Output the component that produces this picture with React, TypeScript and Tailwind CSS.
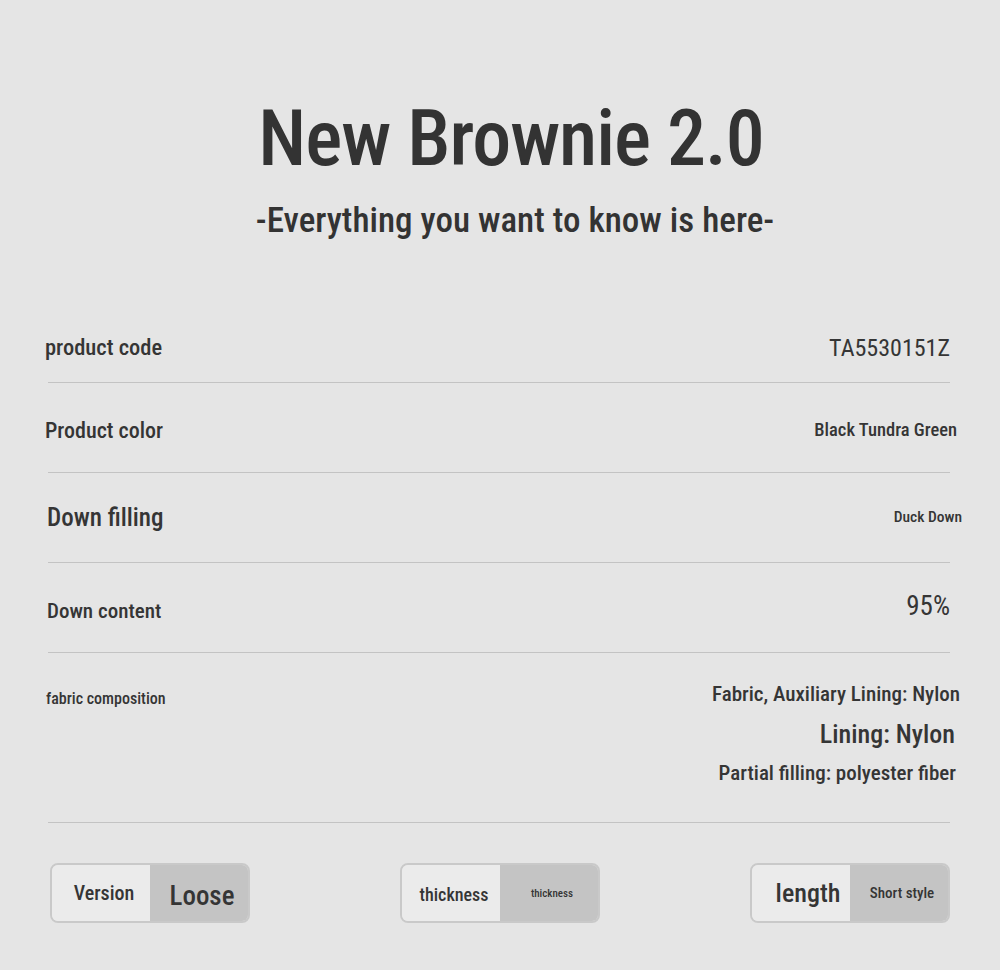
const rows = [
  {
    label: 'product code',
    value: 'TA5530151Z',
    row: 'pt-[20px] pl-[45px] pr-[50px]',
    labelCls: 'text-[22.5px] font-medium',
    valueCls: 'text-[24px] font-normal',
  },
  {
    label: 'Product color',
    value: 'Black Tundra Green',
    row: 'pt-[6px] pl-[45px] pr-[43px]',
    labelCls: 'text-[22px] font-medium',
    valueCls: 'text-[18.5px] font-medium',
  },
  {
    label: 'Down filling',
    value: 'Duck Down',
    row: 'pt-0 pl-[47px] pr-[38px]',
    labelCls: 'text-[25px] font-medium',
    valueCls: 'text-[15.5px] font-medium',
  },
  {
    label: 'Down content',
    value: '95%',
    row: 'pt-[8px] pl-[47px] pr-[50px]',
    labelCls: 'text-[21px] font-medium',
    valueCls: 'text-[27px] font-normal -mt-[10px]',
  },
];

const Divider = () => <div className="ml-[48px] mr-[50px] h-px bg-[#c3c3c3]" />;

const Toggle = ({
  left,
  right,
  leftCls,
  rightCls,
}: {
  left: string;
  right: string;
  leftCls: string;
  rightCls: string;
}) => (
  <div className="flex h-[60px] w-[200px] overflow-hidden rounded-[8px] border-2 border-[#c9c9c9]">
    <div className="flex flex-1 items-center justify-center bg-[#ebebeb] pl-[6px]">
      <span className={`font-medium leading-none ${leftCls}`}>{left}</span>
    </div>
    <div className="flex flex-1 items-center justify-center bg-[#c4c4c4] pl-[6px]">
      <span className={`font-medium leading-none ${rightCls}`}>{right}</span>
    </div>
  </div>
);

export default function App() {
  return (
    <div className="min-h-[970px] w-[1000px] bg-[#e5e5e5] font-['Roboto_Condensed',sans-serif] text-[#353535]">
      <h1 className="pl-[22px] pt-[100px] text-center text-[78px] font-medium leading-none tracking-[-1px] text-[#333]">
        New Brownie 2.0
      </h1>
      <p className="mt-[25px] pl-[30px] text-center text-[35px] font-medium leading-none text-[#333]">
        -Everything you want to know is here-
      </p>

      <div className="mt-[55px]">
        {rows.map((r) => (
          <div key={r.label}>
            <div className={`flex h-[89px] items-center justify-between ${r.row}`}>
              <span className={`leading-none ${r.labelCls}`}>{r.label}</span>
              <span className={`leading-none ${r.valueCls}`}>{r.value}</span>
            </div>
            <Divider />
          </div>
        ))}

        <div className="flex h-[169px] items-start justify-between pl-[46px] pr-[40px]">
          <span className="pt-[38px] text-[16px] font-medium leading-none">fabric composition</span>
          <div className="flex flex-col items-end gap-4 pt-[31px] font-medium leading-none">
            <span className="text-[21px]">Fabric, Auxiliary Lining: Nylon</span>
            <span className="mr-[5px] text-[26px]">Lining: Nylon</span>
            <span className="mr-[4px] text-[21px]">Partial filling: polyester fiber</span>
          </div>
        </div>
        <Divider />
      </div>

      <div className="mt-[40px] flex justify-between px-[50px] pb-[48px]">
        <Toggle left="Version" right="Loose" leftCls="text-[20px]" rightCls="text-[27px] mt-[6px]" />
        <Toggle left="thickness" right="thickness" leftCls="text-[18px] mt-[4px]" rightCls="text-[11px]" />
        <Toggle left="length" right="Short style" leftCls="text-[26px] ml-[8px]" rightCls="text-[15px]" />
      </div>
    </div>
  );
}
